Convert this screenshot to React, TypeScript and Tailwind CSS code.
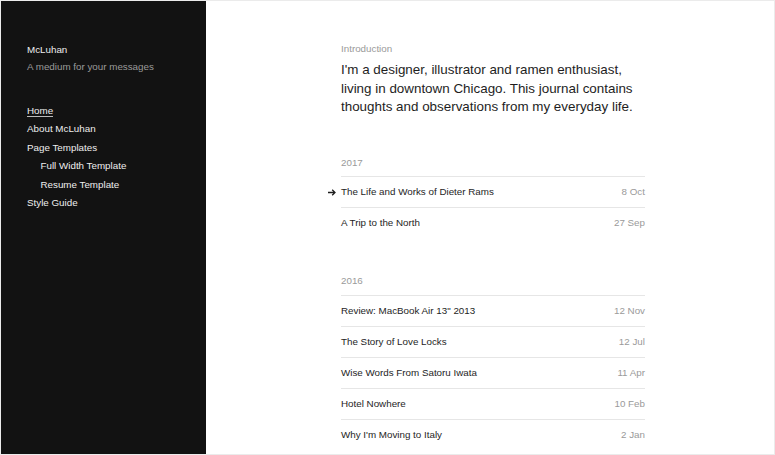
import React from "react";

const font = { fontFamily: '"Liberation Sans", Arial, sans-serif' };

type Post = { title: string; date: string; current?: boolean };

const years: { year: string; posts: Post[]; mt: string; mb: string }[] = [
  {
    year: "2017",
    mt: "mt-[39.5px]",
    mb: "mb-[6px]",
    posts: [
      { title: "The Life and Works of Dieter Rams", date: "8 Oct", current: true },
      { title: "A Trip to the North", date: "27 Sep" },
    ],
  },
  {
    year: "2016",
    mt: "mt-[36px]",
    mb: "mb-[7px]",
    posts: [
      { title: 'Review: MacBook Air 13" 2013', date: "12 Nov" },
      { title: "The Story of Love Locks", date: "12 Jul" },
      { title: "Wise Words From Satoru Iwata", date: "11 Apr" },
      { title: "Hotel Nowhere", date: "10 Feb" },
      { title: "Why I'm Moving to Italy", date: "2 Jan" },
    ],
  },
];

export default function App() {
  return (
    <div
      style={font}
      className="flex w-[775px] h-[455px] border border-[#ebebeb] overflow-hidden bg-white box-border"
    >
      <aside className="w-[205px] shrink-0 bg-[#121212] pl-[26px] pt-[39.5px] text-[9.8px]">
        <div className="leading-[17px] text-[#eeeeee]">McLuhan</div>
        <div className="leading-[17px] text-[#9a9a9a]">A medium for your messages</div>
        <nav className="mt-[27px] text-[#eeeeee] leading-[18.5px]">
          <div>
            <span className="border-b border-[#bbbbbb] pb-[0.5px]">Home</span>
          </div>
          <div>About McLuhan</div>
          <div>Page Templates</div>
          <div className="pl-[13.5px]">Full Width Template</div>
          <div className="pl-[13.5px]">Resume Template</div>
          <div>Style Guide</div>
        </nav>
      </aside>
      <main className="flex-1 pl-[135px] pt-[41px]">
        <div className="w-[304px]">
          <div className="text-[9.8px] leading-[14px] text-[#9a9a9a]">Introduction</div>
          <p className="mt-[5px] text-[13.4px] leading-[18.5px] text-[#1e1e1e]">
            I'm a designer, illustrator and ramen enthusiast, living in downtown Chicago. This
            journal contains thoughts and observations from my everyday life.
          </p>
          {years.map((y) => (
            <section key={y.year} className={y.mt}>
              <div className={`text-[9.8px] leading-[14px] text-[#9a9a9a] ${y.mb}`}>{y.year}</div>
              <ul>
                {y.posts.map((p) => (
                  <li
                    key={p.title}
                    className="relative flex h-[31px] items-center justify-between border-t border-[#e6e6e6] text-[9.8px]"
                  >
                    {p.current && (
                      <svg
                        className="absolute left-[-13px] top-[12px]"
                        width="8"
                        height="7"
                        viewBox="0 0 8 7"
                        fill="none"
                        stroke="#1e1e1e"
                        strokeWidth="1.3"
                      >
                        <path d="M0 3.5H7M4.2 0.7L7 3.5L4.2 6.3" />
                      </svg>
                    )}
                    <span className="text-[#1e1e1e]">{p.title}</span>
                    <span className="text-[#9a9a9a]">{p.date}</span>
                  </li>
                ))}
              </ul>
            </section>
          ))}
        </div>
      </main>
    </div>
  );
}
